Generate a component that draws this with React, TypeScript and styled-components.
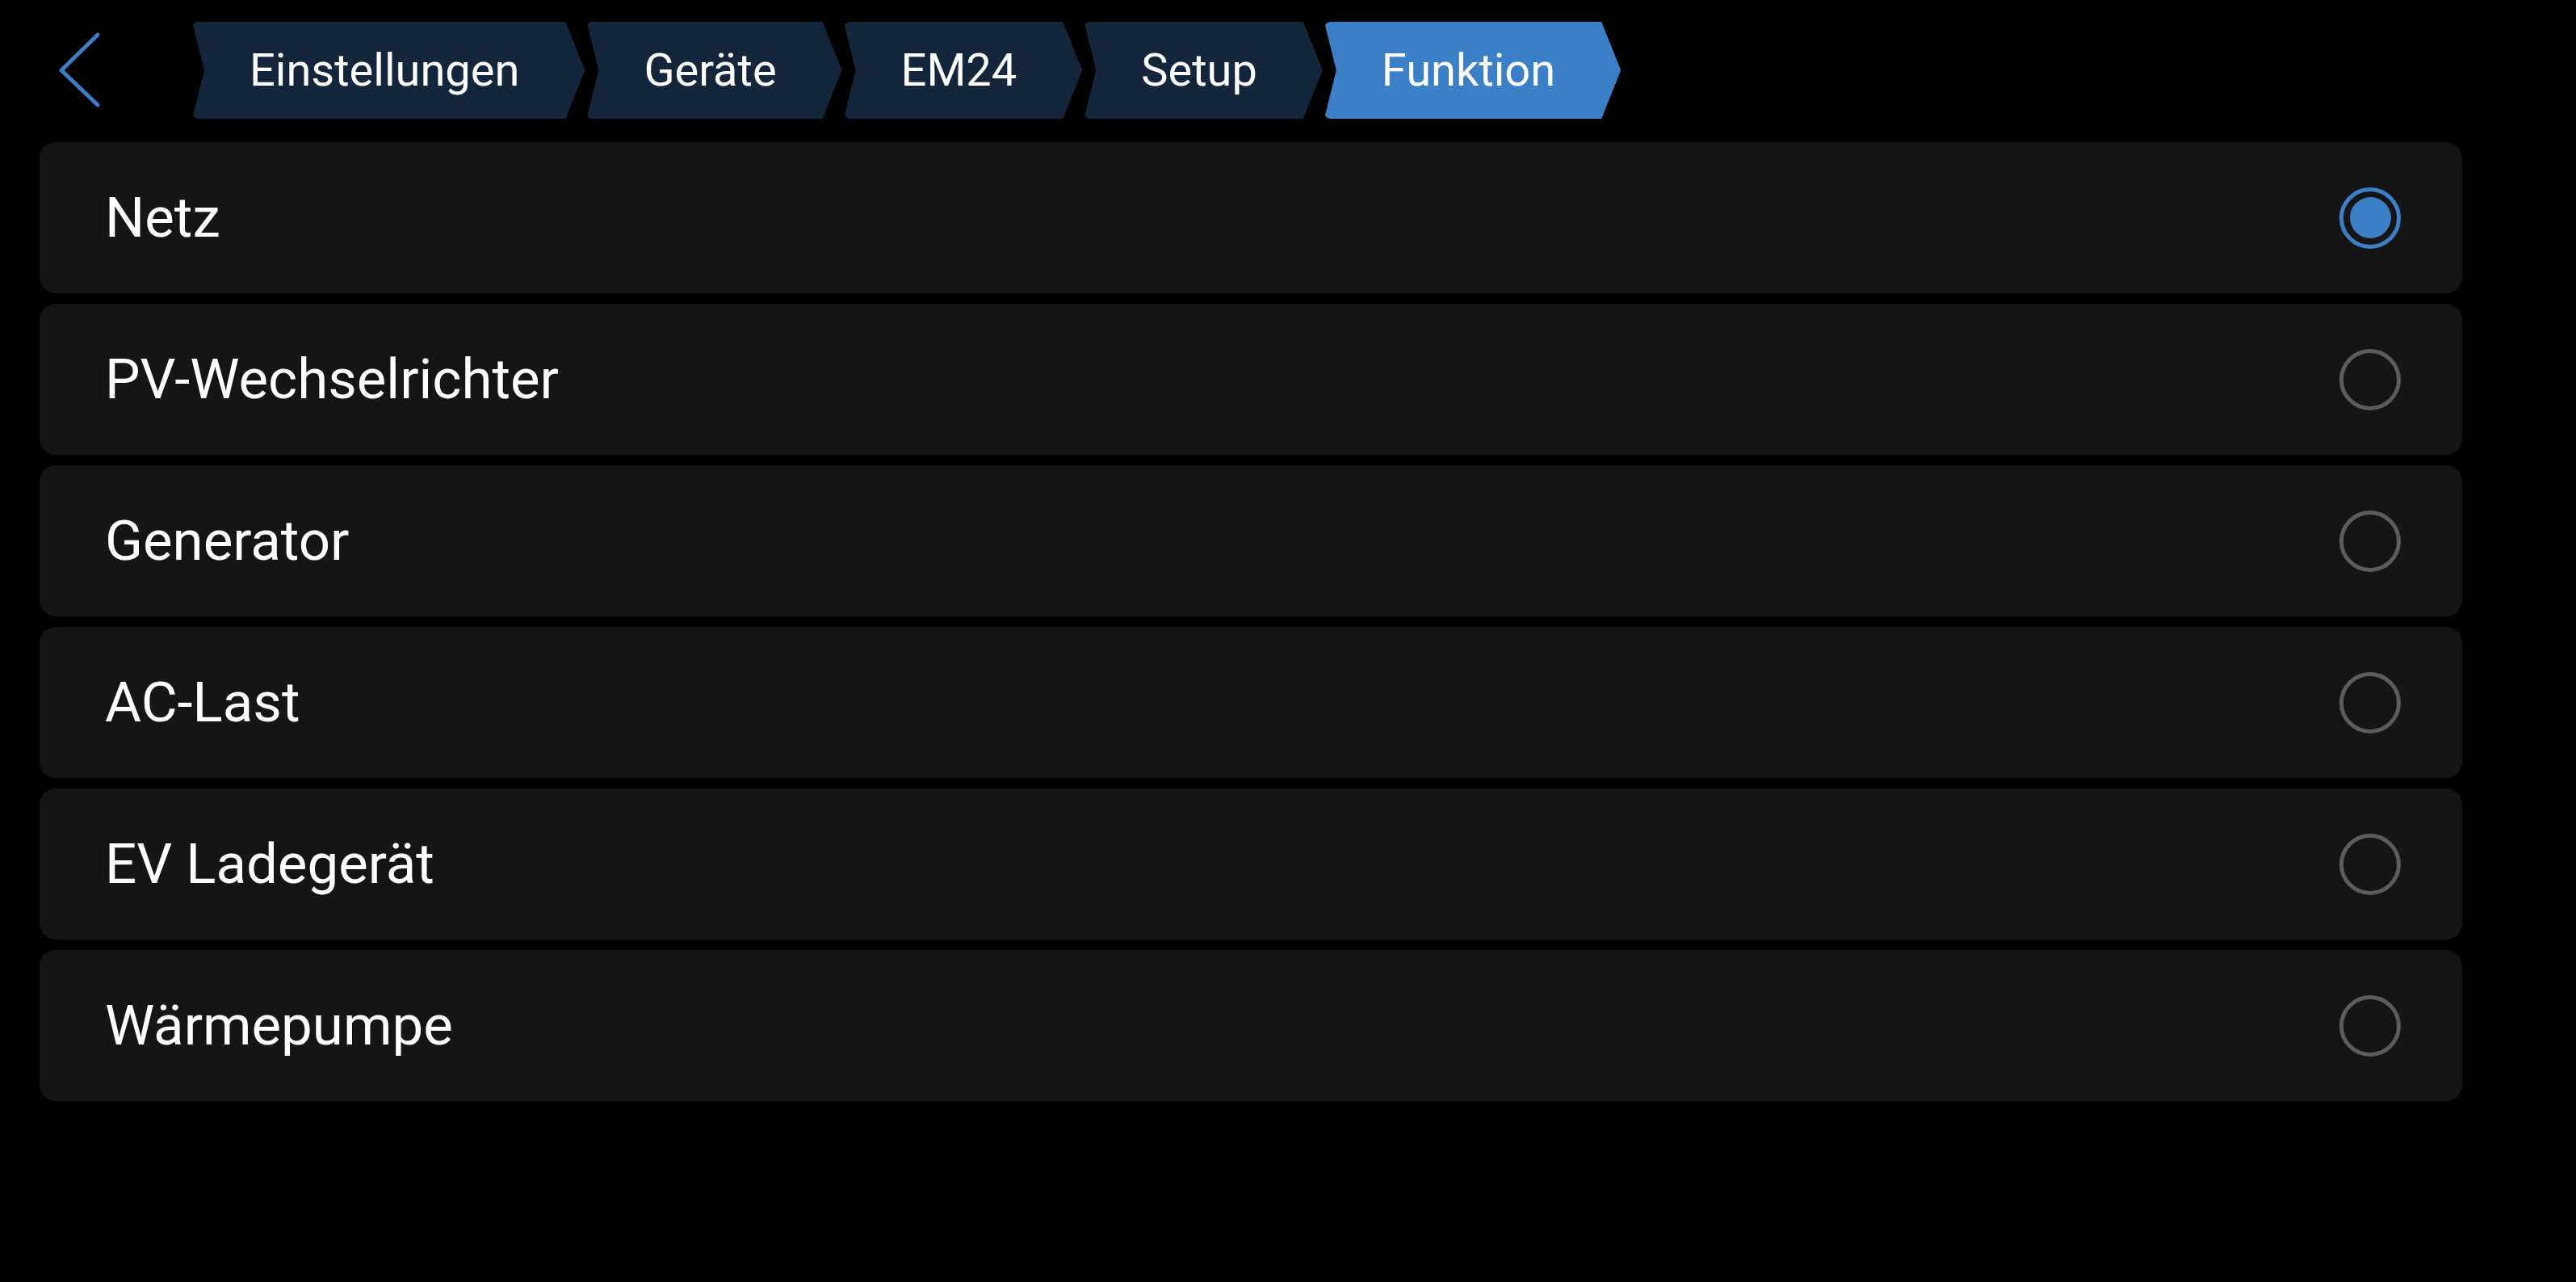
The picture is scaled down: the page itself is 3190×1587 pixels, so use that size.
import React, { useState } from "react";
import styled, { createGlobalStyle } from "styled-components";

const GlobalStyle = createGlobalStyle`
  html, body {
    margin: 0;
    padding: 0;
    background: #000;
  }
  body {
    font-family: Roboto, "Noto Sans", "Liberation Sans", sans-serif;
    color: #fff;
  }
  * { box-sizing: border-box; }
`;

const BLUE = "#3b7fc7";

const Page = styled.div`
  min-height: 100vh;
  background: #000;
  display: flex;
  flex-direction: column;
`;

const Header = styled.header`
  display: flex;
  align-items: center;
  height: 120px;
  margin-top: 27px;
  padding-left: 70px;
`;

const BackButton = styled.button`
  width: 58px;
  height: 100px;
  margin-right: 110px;
  padding: 0;
  border: none;
  background: none;
  cursor: pointer;
  display: flex;
  align-items: center;
  justify-content: flex-start;
`;

const Crumbs = styled.nav`
  display: flex;
  align-items: center;
  gap: 2px;
`;

const Crumb = styled.div<{ $active?: boolean }>`
  height: 120px;
  display: flex;
  align-items: center;
  padding: 0 81px 0 71px;
  background: ${(p) => (p.$active ? BLUE : "#13263c")};
  color: #fff;
  font-family: Roboto, "Noto Sans", sans-serif;
  font-size: 56px;
  line-height: 1;
  white-space: nowrap;
  clip-path: polygon(
    0 0,
    calc(100% - 24px) 0,
    100% 50%,
    calc(100% - 24px) 100%,
    0 100%,
    15px 50%
  );
  border-radius: 8px 4px 4px 8px;
`;

const List = styled.div`
  display: flex;
  flex-direction: column;
  gap: 13px;
  margin: 29px 141px 0 49px;
`;

const Row = styled.div`
  height: 187px;
  background: #151515;
  border-radius: 20px;
  display: flex;
  align-items: center;
  justify-content: space-between;
  padding: 0 76px 0 81px;
  cursor: pointer;
`;

const Label = styled.span`
  font-family: Roboto, "Noto Sans", sans-serif;
  font-size: 69px;
  line-height: 1;
  color: #fff;
`;

const Radio = styled.div<{ $checked: boolean }>`
  width: 76px;
  height: 76px;
  border-radius: 50%;
  border: 5px solid ${(p) => (p.$checked ? BLUE : "#5c5c5c")};
  display: flex;
  align-items: center;
  justify-content: center;
`;

const Dot = styled.div`
  width: 51px;
  height: 51px;
  border-radius: 50%;
  background: ${BLUE};
`;

const crumbs = ["Einstellungen", "Geräte", "EM24", "Setup", "Funktion"];
const options = [
  "Netz",
  "PV-Wechselrichter",
  "Generator",
  "AC-Last",
  "EV Ladegerät",
  "Wärmepumpe",
];

export default function App() {
  const [selected, setSelected] = useState(0);
  return (
    <>
      <GlobalStyle />
      <Page>
        <Header>
          <BackButton aria-label="Zurück">
            <svg width="58" height="100" viewBox="0 0 58 100">
              <path
                d="M51 6 L6 50 L51 93"
                fill="none"
                stroke={BLUE}
                strokeWidth="5"
                strokeLinecap="round"
                strokeLinejoin="round"
              />
            </svg>
          </BackButton>
          <Crumbs>
            {crumbs.map((c, i) => (
              <Crumb key={c} $active={i === crumbs.length - 1}>
                {c}
              </Crumb>
            ))}
          </Crumbs>
        </Header>
        <List>
          {options.map((o, i) => (
            <Row key={o} onClick={() => setSelected(i)}>
              <Label>{o}</Label>
              <Radio $checked={selected === i}>{selected === i && <Dot />}</Radio>
            </Row>
          ))}
        </List>
      </Page>
    </>
  );
}
